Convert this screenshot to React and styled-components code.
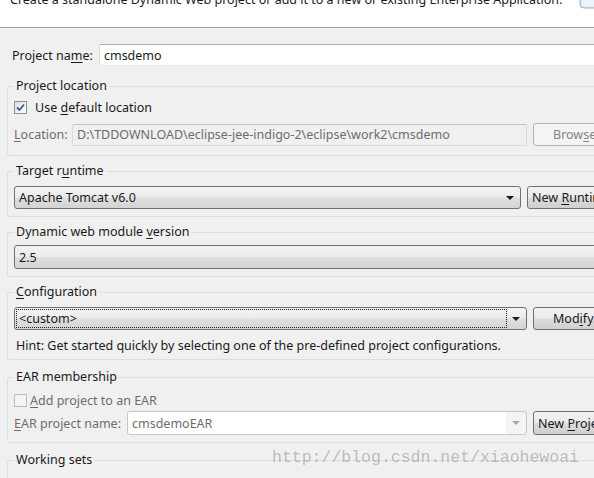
import React from 'react';
import styled, { createGlobalStyle } from 'styled-components';

const GlobalStyle = createGlobalStyle`
  html, body {
    margin: 0;
    padding: 0;
    background: #f0f0f0;
    overflow: hidden;
  }
  body {
    font-family: "Noto Sans", "Open Sans", sans-serif;
    font-size: 12.5px;
    color: #1a1a1a;
  }
`;

const Page = styled.div`
  position: relative;
  width: 640px;
  height: 478px;
  overflow: hidden;
`;

const Banner = styled.div`
  display: flex;
  align-items: flex-start;
  gap: 17px;
  height: 27px;
  background: #ffffff;
  border-bottom: 1px solid #a0a0a0;
  padding-left: 10px;
  overflow: hidden;
`;

const BannerText = styled.div`
  margin-top: -8px;
  line-height: 16px;
  white-space: nowrap;
`;

const Body = styled.div`
  display: flex;
  flex-direction: column;
  padding: 16px 0 0 7px;
`;

const NameRow = styled.div`
  display: flex;
  align-items: center;
  gap: 6px;
  padding-left: 5px;
  height: 22px;
  margin-bottom: 12px;
`;

const Label = styled.span`
  white-space: nowrap;
  color: ${p => (p.disabled ? '#6d6d6d' : '#1a1a1a')};
`;

const TextInput = styled.div`
  flex: 1;
  height: 20px;
  display: flex;
  align-items: center;
  padding-left: 4px;
  background: ${p => (p.disabled ? '#f0f0f0' : '#ffffff')};
  border: 1px solid;
  border-color: ${p =>
    p.disabled ? '#c3c3c3 #d9d9d9 #d9d9d9 #d9d9d9' : '#abadb3 #e2e3ea #e3e9ef #dbdfe6'};
  color: ${p => (p.disabled ? '#6d6d6d' : '#1a1a1a')};
  border-radius: 2px;
  white-space: nowrap;
  overflow: hidden;
`;

const Group = styled.fieldset`
  margin: 0 0 ${p => p.gap ?? 0}px 0;
  padding: ${p => p.pt ?? 6}px 0 ${p => p.pb ?? 8}px 6px;
  min-width: 0;
  border: 1px solid #d5dfe5;
  border-radius: 3px;
  display: flex;
  flex-direction: column;
`;

const Legend = styled.legend`
  padding: 0 2px;
  line-height: 16px;
  color: #1a1a1a;
`;

const Mn = styled.span`
  text-decoration: underline;
  text-underline-offset: 2px;
`;

const CheckRow = styled.div`
  display: flex;
  align-items: center;
  gap: ${p => p.gap ?? 8}px;
  height: 16px;
  margin-bottom: ${p => p.mb ?? 8}px;
  color: ${p => (p.disabled ? '#6d6d6d' : '#1a1a1a')};
`;

const Box = styled.span`
  width: 11px;
  height: 11px;
  border: 1px solid ${p => (p.disabled ? '#bcbcbc' : '#8e8f8f')};
  background: ${p =>
    p.disabled ? '#f4f4f4' : 'linear-gradient(135deg, #dcdcdc 0%, #f4f4f4 60%, #ffffff 100%)'};
  display: flex;
  align-items: center;
  justify-content: center;
`;

const Row = styled.div`
  display: grid;
  grid-template-columns: ${p => p.cols};
  column-gap: 6px;
  align-items: center;
`;

const Combo = styled.div`
  position: relative;
  height: ${p => p.h ?? 21}px;
  display: flex;
  align-items: center;
  padding-left: 4px;
  border: 1px solid ${p => (p.disabled ? '#c3c7ca' : '#707070')};
  border-radius: 3px;
  background: ${p =>
    p.disabled
      ? 'linear-gradient(to right, #ffffff 0, #ffffff calc(100% - 20px), #f4f4f4 calc(100% - 20px))'
      : 'linear-gradient(#f3f3f3 0%, #ececec 48%, #dfdfdf 52%, #d4d4d4 100%)'};
  color: ${p => (p.disabled ? '#6d6d6d' : '#1a1a1a')};
  white-space: nowrap;
`;

const Focus = styled.div`
  position: absolute;
  left: 1px;
  top: 1px;
  bottom: 1px;
  right: 19px;
  border: 1px dotted #202020;
`;

const Arrow = styled.span`
  margin-left: auto;
  margin-right: 6px;
  width: 0;
  height: 0;
  border-left: 4px solid transparent;
  border-right: 4px solid transparent;
  border-top: 4px solid ${p => (p.disabled ? '#a8a8a8' : '#1a1a1a')};
`;

const Button = styled.div`
  height: ${p => p.h ?? 21}px;
  display: flex;
  align-items: center;
  padding-left: ${p => p.pl ?? 4}px;
  border: 1px solid ${p => (p.disabled ? '#adb2b5' : '#707070')};
  border-radius: 3px;
  background: ${p =>
    p.disabled
      ? '#f4f4f4'
      : 'linear-gradient(#f2f2f2 0%, #ebebeb 48%, #dddddd 52%, #cfcfcf 100%)'};
  color: ${p => (p.disabled ? '#838383' : '#1a1a1a')};
  white-space: nowrap;
`;

const Hint = styled.div`
  margin-top: 8px;
  line-height: 16px;
  padding-left: 2px;
`;

const Watermark = styled.div`
  position: absolute;
  left: 272px;
  top: 448px;
  font-family: "Liberation Mono", monospace;
  font-size: 16.5px;
  line-height: 20px;
  color: rgba(120, 120, 120, 0.45);
  white-space: nowrap;
  pointer-events: none;
`;

const Check = () => (
  <svg width="9" height="9" viewBox="0 0 9 9">
    <path d="M1 4.5 L3.5 7 L8 1.5" fill="none" stroke="#3d5a98" strokeWidth="1.8" />
  </svg>
);

const WizardBadge = () => (
  <svg width="20" height="10" viewBox="0 0 20 10">
    <rect x="1" y="-8" width="22" height="16" rx="4" fill="#dfe8f2" stroke="#9fb0c4" />
    <rect x="3" y="-6" width="18" height="12" rx="3" fill="#eef3f8" />
  </svg>
);

export default function App() {
  return (
    <Page>
      <GlobalStyle />
      <Banner>
        <BannerText>
          Create a standalone Dynamic Web project or add it to a new or existing Enterprise Application.
        </BannerText>
        <WizardBadge />
      </Banner>

      <Body>
        <NameRow>
          <Label>
            Project na<Mn>m</Mn>e:
          </Label>
          <TextInput>cmsdemo</TextInput>
        </NameRow>

        <Group pt={5} pb={9} gap={7}>
          <Legend>Project location</Legend>
          <CheckRow>
            <Box>
              <Check />
            </Box>
            <span>
              Use <Mn>d</Mn>efault location
            </span>
          </CheckRow>
          <Row cols="52px 455px 1fr">
            <Label disabled>
              <Mn>L</Mn>ocation:
            </Label>
            <TextInput disabled>D:\TDDOWNLOAD\eclipse-jee-indigo-2\eclipse\work2\cmsdemo</TextInput>
            <Button disabled pl={19}>
              <span>
                Brow<Mn>s</Mn>e...
              </span>
            </Button>
          </Row>
        </Group>

        <Group pt={7} pb={7} gap={7}>
          <Legend>
            Target r<Mn>u</Mn>ntime
          </Legend>
          <Row cols="507px 1fr">
            <Combo h={21}>
              Apache Tomcat v6.0
              <Arrow />
            </Combo>
            <Button>
              <span>
                New <Mn>R</Mn>untime...
              </span>
            </Button>
          </Row>
        </Group>

        <Group pt={5} pb={7} gap={7}>
          <Legend>
            Dynamic web module <Mn>v</Mn>ersion
          </Legend>
          <Combo h={22}>
            2.5
            <Arrow />
          </Combo>
        </Group>

        <Group pt={7} pb={5} gap={9}>
          <Legend>
            <Mn>C</Mn>onfiguration
          </Legend>
          <Row cols="513px 1fr">
            <Combo h={21}>
              <Focus />
              &lt;custom&gt;
              <Arrow />
            </Combo>
            <Button pl={19}>
              <span>
                Mod<Mn>i</Mn>fy...
              </span>
            </Button>
          </Row>
          <Hint>Hint: Get started quickly by selecting one of the pre-defined project configurations.</Hint>
        </Group>

        <Group pt={7} pb={7} gap={9}>
          <Legend>EAR membership</Legend>
          <CheckRow disabled gap={3} mb={3}>
            <Box disabled />
            <span>
              <Mn>A</Mn>dd project to an EAR
            </span>
          </CheckRow>
          <Row cols="107px 400px 1fr">
            <Label disabled>
              <Mn>E</Mn>AR project name:
            </Label>
            <Combo disabled h={22}>
              cmsdemoEAR
              <Arrow disabled />
            </Combo>
            <Button h={22}>
              <span>
                New <Mn>P</Mn>roject...
              </span>
            </Button>
          </Row>
        </Group>

        <Group pt={6} pb={40}>
          <Legend>Working sets</Legend>
        </Group>
      </Body>

      <Watermark>http://blog.csdn.net/xiaohewoai</Watermark>
    </Page>
  );
}
